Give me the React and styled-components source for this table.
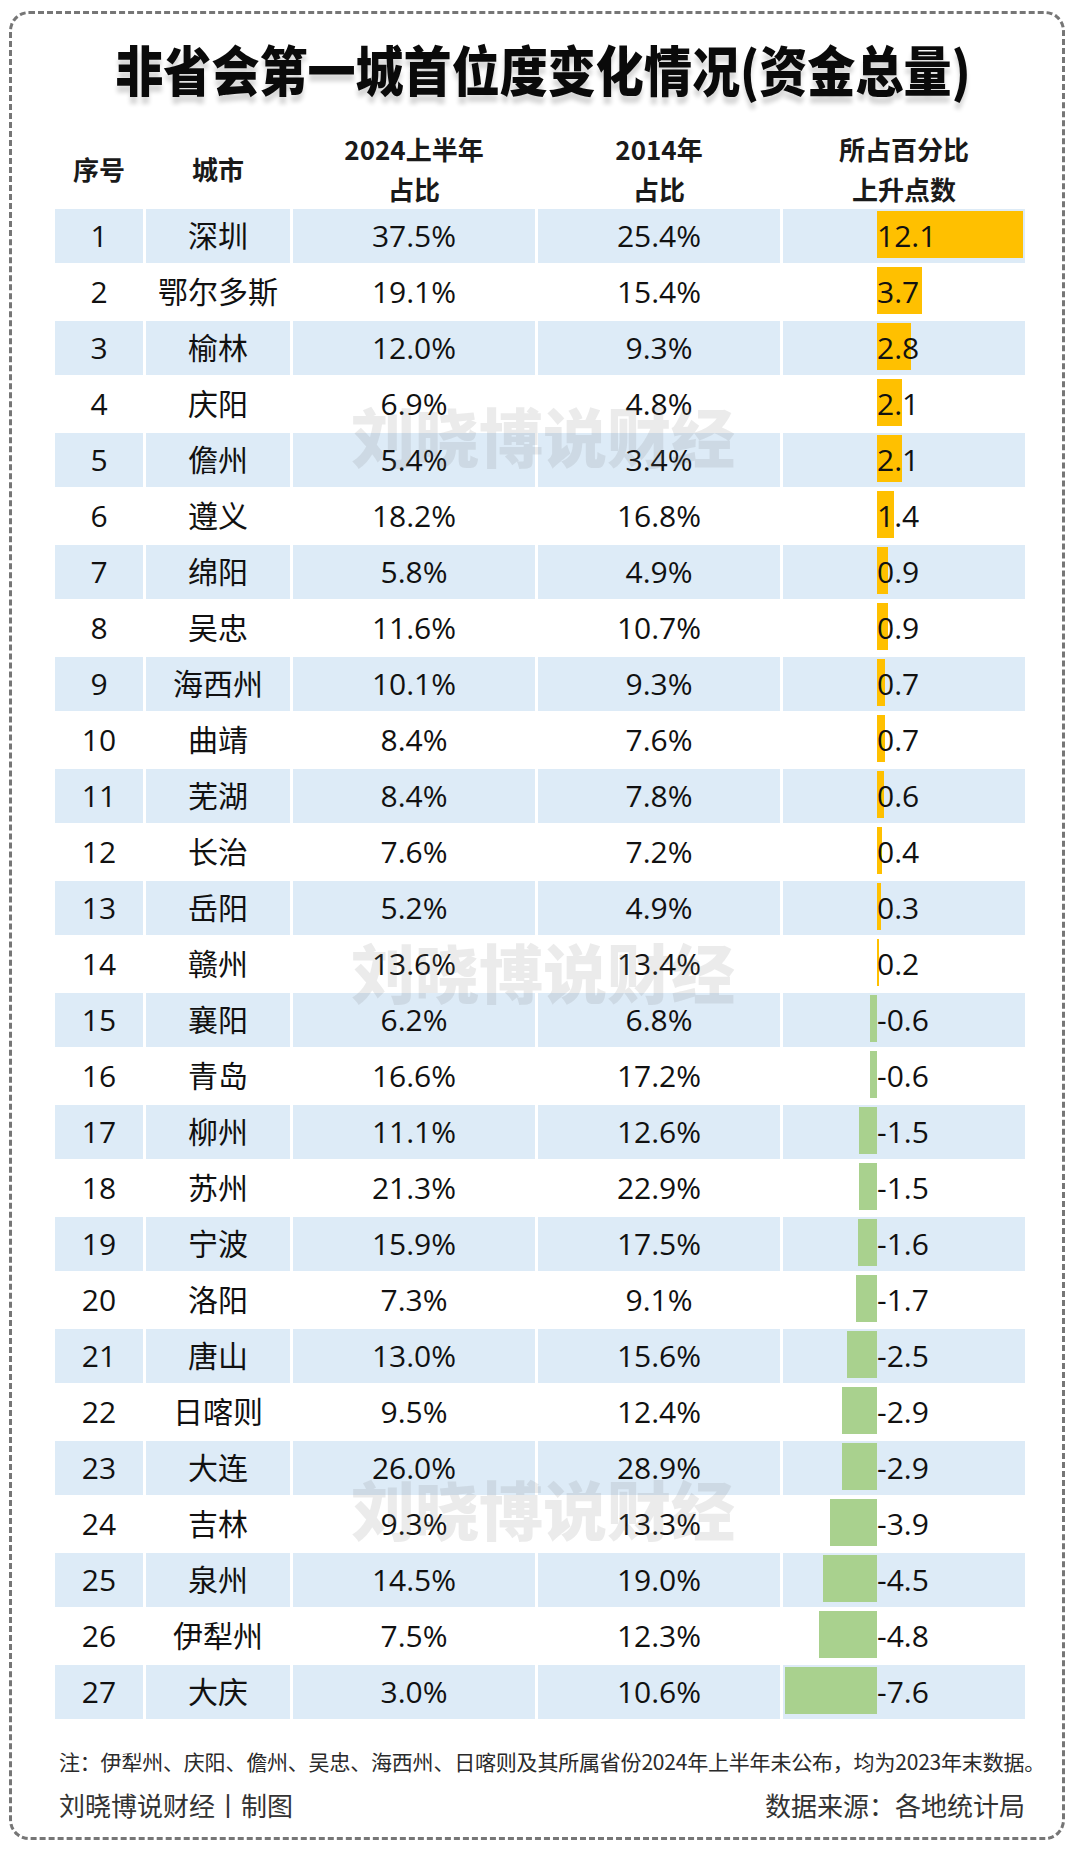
import React from "react";
import styled, { createGlobalStyle } from "styled-components";

const GlobalStyle = createGlobalStyle`
  html, body { margin: 0; padding: 0; background: #ffffff; }
  body { font-family: "Noto Sans CJK SC", "Noto Sans", sans-serif; color: #111; }
`;

const ROWS = [
  [1, "深圳", "37.5%", "25.4%", 12.1],
  [2, "鄂尔多斯", "19.1%", "15.4%", 3.7],
  [3, "榆林", "12.0%", "9.3%", 2.8],
  [4, "庆阳", "6.9%", "4.8%", 2.1],
  [5, "儋州", "5.4%", "3.4%", 2.1],
  [6, "遵义", "18.2%", "16.8%", 1.4],
  [7, "绵阳", "5.8%", "4.9%", 0.9],
  [8, "吴忠", "11.6%", "10.7%", 0.9],
  [9, "海西州", "10.1%", "9.3%", 0.7],
  [10, "曲靖", "8.4%", "7.6%", 0.7],
  [11, "芜湖", "8.4%", "7.8%", 0.6],
  [12, "长治", "7.6%", "7.2%", 0.4],
  [13, "岳阳", "5.2%", "4.9%", 0.3],
  [14, "赣州", "13.6%", "13.4%", 0.2],
  [15, "襄阳", "6.2%", "6.8%", -0.6],
  [16, "青岛", "16.6%", "17.2%", -0.6],
  [17, "柳州", "11.1%", "12.6%", -1.5],
  [18, "苏州", "21.3%", "22.9%", -1.5],
  [19, "宁波", "15.9%", "17.5%", -1.6],
  [20, "洛阳", "7.3%", "9.1%", -1.7],
  [21, "唐山", "13.0%", "15.6%", -2.5],
  [22, "日喀则", "9.5%", "12.4%", -2.9],
  [23, "大连", "26.0%", "28.9%", -2.9],
  [24, "吉林", "9.3%", "13.3%", -3.9],
  [25, "泉州", "14.5%", "19.0%", -4.5],
  [26, "伊犁州", "7.5%", "12.3%", -4.8],
  [27, "大庆", "3.0%", "10.6%", -7.6],
];

const UNIT = 12.1;
const COLS = "88px 144px 242px 242px 242px";

const Page = styled.div`
  width: 1080px;
  height: 1853px;
  box-sizing: border-box;
  padding: 11px 15px 13px 9px;
`;

const Frame = styled.div`
  position: relative;
  height: 100%;
  box-sizing: border-box;
  border: 3px dashed #767676;
  border-radius: 20px;
  padding: 0 37px 0 43px;
  display: flex;
  flex-direction: column;
`;

const Title = styled.h1`
  margin: 23px 0 0;
  height: 64px;
  line-height: 64px;
  text-align: center;
  font-family: "Noto Sans CJK SC", sans-serif;
  font-weight: 900;
  font-size: 54px;
  letter-spacing: 0;
  color: #0a0a0a;
  text-shadow: 0 7px 5px rgba(0, 0, 0, 0.16);
  transform: translateX(3px) scaleX(0.89);
  white-space: nowrap;
`;

const HeaderRow = styled.div`
  margin-top: 28px;
  display: grid;
  grid-template-columns: ${COLS};
  column-gap: 3px;
  height: 80px;
`;

const HeadCell = styled.div`
  display: flex;
  flex-direction: column;
  align-items: center;
  justify-content: center;
  font-family: "Noto Sans CJK SC", sans-serif;
  font-weight: 700;
  font-size: 26px;
  line-height: 40px;
  color: #1a1a1a;
  white-space: nowrap;
`;

const Table = styled.div`
  display: flex;
  flex-direction: column;
  row-gap: 2px;
`;

const Row = styled.div`
  display: grid;
  grid-template-columns: ${COLS};
  column-gap: 3px;
  height: 54px;
`;

const Cell = styled.div`
  background: ${(p) => (p.$striped ? "#DDEBF7" : "#ffffff")};
  display: flex;
  align-items: center;
  justify-content: center;
  font-family: "Open Sans", "Noto Sans CJK SC", sans-serif;
  font-size: 30px;
  line-height: 54px;
  color: #111;
  white-space: nowrap;
`;

const BarCell = styled.div`
  background: ${(p) => (p.$striped ? "#DDEBF7" : "#ffffff")};
  display: flex;
  align-items: stretch;
`;

const NegSide = styled.div`
  width: 94px;
  flex: none;
  display: flex;
  justify-content: flex-end;
  align-items: flex-start;
`;

const PosSide = styled.div`
  position: relative;
  flex: 1;
  display: flex;
  align-items: center;
`;

const Bar = styled.div`
  height: 47px;
  margin-top: 2px;
  background: ${(p) => (p.$neg ? "#A9D18E" : "#FFC000")};
  ${(p) => (p.$neg ? "" : "position: absolute; left: 0; top: 0;")}
`;

const Value = styled.span`
  position: relative;
  font-family: "Open Sans", "Noto Sans CJK SC", sans-serif;
  font-size: 30px;
  line-height: 54px;
  color: #111;
  white-space: nowrap;
`;

const Note = styled.p`
  margin: 27px 0 0 4px;
  font-family: "Noto Sans CJK SC", sans-serif;
  font-size: 21px;
  line-height: 30px;
  letter-spacing: -0.2px;
  color: #2a2a2a;
  white-space: nowrap;
`;

const Credits = styled.div`
  margin: 12px 0 0 4px;
  display: flex;
  justify-content: space-between;
  font-family: "Noto Sans CJK SC", sans-serif;
  font-size: 26px;
  line-height: 34px;
  color: #333;
  white-space: nowrap;
`;

const Watermark = styled.div`
  position: absolute;
  left: 531px;
  top: ${(p) => p.$y}px;
  transform: translate(-50%, -50%);
  font-family: "Noto Sans CJK SC", sans-serif;
  font-weight: 900;
  font-size: 64px;
  line-height: 1;
  color: rgba(110, 110, 110, 0.14);
  white-space: nowrap;
  pointer-events: none;
`;

function BarValue({ v, striped }) {
  const w = Math.abs(v) * UNIT;
  return (
    <BarCell $striped={striped}>
      <NegSide>{v < 0 && <Bar $neg style={{ width: `${w}px` }} />}</NegSide>
      <PosSide>
        {v > 0 && <Bar style={{ width: `${w}px` }} />}
        <Value>{v.toFixed(1)}</Value>
      </PosSide>
    </BarCell>
  );
}

export default function App() {
  return (
    <>
      <GlobalStyle />
      <Page>
        <Frame>
          <Title>非省会第一城首位度变化情况(资金总量)</Title>
          <HeaderRow>
            <HeadCell>序号</HeadCell>
            <HeadCell>城市</HeadCell>
            <HeadCell>
              <span>2024上半年</span>
              <span>占比</span>
            </HeadCell>
            <HeadCell>
              <span>2014年</span>
              <span>占比</span>
            </HeadCell>
            <HeadCell>
              <span>所占百分比</span>
              <span>上升点数</span>
            </HeadCell>
          </HeaderRow>
          <Table>
            {ROWS.map(([n, city, a, b, v]) => {
              const striped = n % 2 === 1;
              return (
                <Row key={n}>
                  <Cell $striped={striped}>{n}</Cell>
                  <Cell $striped={striped}>{city}</Cell>
                  <Cell $striped={striped}>{a}</Cell>
                  <Cell $striped={striped}>{b}</Cell>
                  <BarValue v={v} striped={striped} />
                </Row>
              );
            })}
          </Table>
          <Note>注：伊犁州、庆阳、儋州、吴忠、海西州、日喀则及其所属省份2024年上半年未公布，均为2023年末数据。</Note>
          <Credits>
            <span>刘晓博说财经丨制图</span>
            <span>数据来源：各地统计局</span>
          </Credits>
          <Watermark $y={420}>刘晓博说财经</Watermark>
          <Watermark $y={956}>刘晓博说财经</Watermark>
          <Watermark $y={1493}>刘晓博说财经</Watermark>
        </Frame>
      </Page>
    </>
  );
}
